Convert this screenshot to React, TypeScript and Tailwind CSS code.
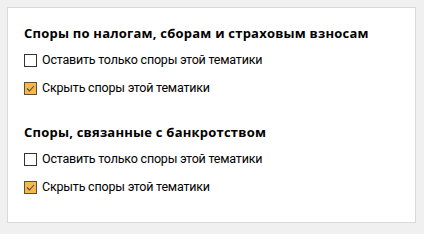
import React from "react";

function Box({ checked }: { checked?: boolean }) {
  if (checked) {
    return (
      <span className="flex h-[13px] w-[13px] shrink-0 items-center justify-center border border-[#5a5040] bg-[#f8b74a]">
        <svg width="11" height="11" viewBox="0 0 11 11">
          <path d="M2 5.5 L4.5 8 L9 3" fill="none" stroke="#4a4a4a" strokeWidth="1.1" />
        </svg>
      </span>
    );
  }
  return <span className="block h-[13px] w-[13px] shrink-0 border border-[#333] bg-white" />;
}

function Row({ label, checked }: { label: string; checked?: boolean }) {
  return (
    <div className="flex h-[16px] items-center gap-[5px]">
      <Box checked={checked} />
      <span className="font-['Roboto',sans-serif] text-[12.5px] leading-[16px] tracking-[-0.2px] text-black">{label}</span>
    </div>
  );
}

function Section({ title }: { title: string }) {
  return (
    <div className="flex flex-col">
      <div className="font-['Open_Sans',sans-serif] text-[13px] font-bold leading-[16px] tracking-[0.22px] text-black">{title}</div>
      <div className="mt-[11px] flex flex-col gap-[12px]">
        <Row label="Оставить только споры этой тематики" />
        <Row label="Скрыть споры этой тематики" checked />
      </div>
    </div>
  );
}

export default function App() {
  return (
    <div className="h-[234px] w-[424px] bg-[#f0f0f0] p-[7px]">
      <div className="flex h-[216px] w-[409px] flex-col gap-[28px] border border-[#d9d9d9] bg-white pl-[16px] pt-[17px]">
        <Section title="Споры по налогам, сборам и страховым взносам" />
        <Section title="Споры, связанные с банкротством" />
      </div>
    </div>
  );
}
